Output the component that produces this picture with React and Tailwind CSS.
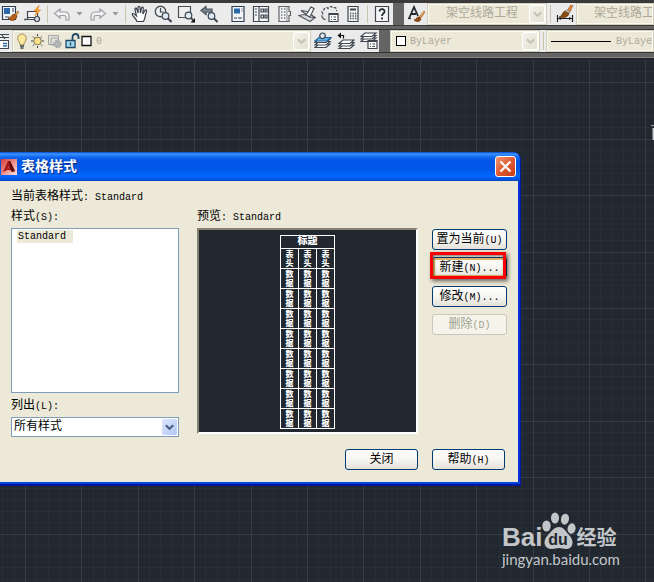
import React from "react";

/* ---------- small shared pieces ---------- */

const Latin = ({ children }) => <span className="text-[10px]">{children}</span>;

const Icon = ({ children }) => (
  <svg width="18" height="18" viewBox="0 0 18 18" fill="none" stroke="#3f4650" strokeWidth="1.2" aria-hidden="true">
    {children}
  </svg>
);

const Tool = ({ label, children }) => (
  <button type="button" aria-label={label} className="flex h-[22px] w-[23px] shrink-0 items-center justify-center">
    <Icon>{children}</Icon>
  </button>
);

const Split = () => (
  <span className="flex h-[22px] w-[6px] shrink-0 justify-center py-[2px]">
    <span className="w-px bg-[#c9c5a8]" />
  </span>
);

const Drop = ({ label }) => (
  <button type="button" aria-label={label} className="flex h-[22px] w-[13px] shrink-0 items-center justify-center">
    <svg width="7" height="4" viewBox="0 0 7 4"><path d="M0.5 0h6L3.5 3.6z" fill="#94979d" /></svg>
  </button>
);

const Chevron = ({ color }) => (
  <svg width="9" height="7" viewBox="0 0 9 7" fill="none" stroke={color} strokeWidth="2.2">
    <path d="M0.8 1.2L4.5 4.8L8.2 1.2" />
  </svg>
);

const Stack = () => (
  <>
    <path d="M5 12h11l-4 3.500H1z" fill="#fff" />
    <path d="M5 9.500h11l-4 3.500H1z" fill="#fff" />
    <path d="M5 7h11l-4 3.500H1z" fill="#fff" />
  </>
);

const Brush = () => (
  <>
    <path d="M11 9l5-8 1.500 1-3.500 8z" fill="#e08a3c" stroke="#9a5a20" strokeWidth="0.700" />
    <path d="M3 15c3 0 3-5 6-6l4 1.500c0 4-4 6.500-10 4.500z" fill="#8a4c14" stroke="#5f3410" strokeWidth="0.700" />
    <path d="M9 9l1.500-1 3.500 1.500-.8 1.500z" fill="#ddd" stroke="#555" strokeWidth="0.500" />
  </>
);

/* A faded combo of the toolbars: content, select and the arrow block */
const Combo = ({ label, value, className, lead, latin, arrow = true }) => (
  <div className={"flex min-w-0 items-center overflow-hidden border-2 border-[#fbfaf2] bg-[#ece9d8] outline outline-1 -outline-offset-1 outline-[#d2cfbb] " + className}>
    {lead}
    <select
      aria-label={label}
      className={"h-full min-w-0 flex-1 appearance-none bg-transparent text-[#aca899] outline-none " + (latin ? "text-[10px]" : "text-[12px]")}
    >
      <option>{value}</option>
    </select>
    {arrow && (
      <span className="flex h-full w-[16px] shrink-0 items-center justify-center rounded-[2px] border border-white bg-gradient-to-br from-[#f3f2ea] to-[#e4e1d2]">
        <Chevron color="#c6c3b5" />
      </span>
    )}
  </div>
);

/* ---------- toolbars ---------- */

const StandardBar = () => (
  <div className="flex h-[22px] w-[393px] shrink-0 overflow-hidden bg-[#ebebeb]">
    <div className="-ml-[2px] flex">
      <Tool label="工作空间">
        <path d="M1.500 1.500h13v13h-13z" fill="#f4f6f8" stroke="#2c3e56" />
        <path d="M3 3h6v6H3z" fill="#2b6aa8" stroke="none" />
        <path d="M4 12h4M11 4h2M11 6h2" stroke="#2c3e56" />
        <path d="M13 10l4-4 1 1-3 4z" fill="#e8a04c" stroke="#9a5a20" strokeWidth="0.600" />
        <path d="M7 13c3 0 3-3 6-4l3 2c-1 5-6 6-9 2z" fill="#b4601c" stroke="#6f3a10" strokeWidth="0.700" />
      </Tool>
      <Tool label="打印">
        <path d="M3.500 6.500h10v6h-10z" fill="#f3f3f3" />
        <path d="M1 14.500h11M1 13.500v2M3.500 12.500v2" />
        <circle cx="13" cy="14" r="2.500" fill="#dce4ee" />
        <path d="M15 0.500L10 6h3l-2 4.500L16.500 5h-3z" fill="#ffb03a" stroke="#e07a10" strokeWidth="0.700" />
      </Tool>
      <Split />
      <Tool label="放弃">
        <path d="M1.500 8.500L7 4v3h4.500c3 0 4.500 2 4.500 4.500V15h-3v-3c0-1-1-1.500-2-1.500H7V13z" fill="#f4f4f4" stroke="#9b9ea3" />
      </Tool>
      <Drop label="放弃列表" />
      <Tool label="重做">
        <path d="M16.500 8.500L11 4v3H6.500C3.500 7 2 9 2 11.500V15h3v-3c0-1 1-1.500 2-1.500h4V13z" fill="#f4f4f4" stroke="#9b9ea3" />
      </Tool>
      <Drop label="重做列表" />
      <Split />
      <Tool label="平移">
        <path d="M6 16.500c-1-3-3-4-4.500-6.500-.8-1.500 1-2 2-.8L5.500 11 4 4.500c-.3-1.600 1.400-1.800 1.800-.3L7.200 8 7 2.500c0-1.600 1.800-1.600 2 0L9.500 8l1-5c.3-1.500 2-1.200 1.800.3L11.800 9l2-3.500c.8-1.300 2.300-.4 1.700.9C14 10 14.500 13 12.500 16.500z" fill="#fff" stroke="#383e47" />
      </Tool>
      <Tool label="实时缩放">
        <circle cx="6.500" cy="6.500" r="5.200" fill="#f0f0f0" stroke="#4a5058" strokeWidth="1.400" />
        <path d="M6.500 3v4h3" />
        <circle cx="11.500" cy="11" r="3.300" fill="#dbe9f4" />
        <path d="M14 13.500l3.500 3.500" strokeWidth="2" />
      </Tool>
      <Tool label="窗口缩放">
        <path d="M1.500 1.500h12v11h-12z" fill="#eee" stroke="#4a5058" />
        <circle cx="11.500" cy="10.500" r="3.300" fill="#dbe9f4" />
        <path d="M14 13l2 2" strokeWidth="1.800" />
        <path d="M18 13v4.500h-4.500z" fill="#111" stroke="none" />
      </Tool>
      <Tool label="缩放上一个">
        <path d="M1 5.500L6 1.500v2.500h6v3H6v2.500z" fill="#7b8796" stroke="#4a5058" />
        <circle cx="11.500" cy="11" r="3.300" fill="#dbe9f4" />
        <path d="M14 13.500l3.500 3.500" strokeWidth="2" />
      </Tool>
      <span className="w-[6px] shrink-0" />
      <Tool label="特性">
        <path d="M3 1.500h12v15H3z" fill="#f5f6f8" stroke="#2c3e56" />
        <path d="M5 3.500h6v5H5z" fill="#2b6aa8" stroke="none" />
        <path d="M12.500 4h1M12.500 6h1M5 13h3M9 13h4" stroke="#2c3e56" />
      </Tool>
      <Tool label="设计中心">
        <path d="M1.500 1.500h15v15h-15zM7 1.500v15" fill="#f5f6f8" />
        <path d="M3 4h2M3 7h2M3 10h2M9 4h2.500v3H9zM13 4h2v3h-2zM9 10h2.500v3H9zM13 10h2v3h-2z" />
      </Tool>
      <Tool label="工具选项板">
        <path d="M4 1.500h10v5h1.500v4H14v6H4z" fill="#f2f2f2" stroke="#5f646b" />
        <path d="M6 4h1.500M9 4h1.500M6 7h1.500M9 7h1.500M6 10h1.500M9 10h1.500M6 13h1.500M9 13h1.500" stroke="#777c83" strokeWidth="1.500" />
        <path d="M12 2v14" stroke="#9a9ea4" />
      </Tool>
      <Tool label="图纸集">
        <path d="M1 10.500l5-1 11 3-5 4z" fill="#d8dade" stroke="#596069" />
        <path d="M3 5.500L12 12l5 .5L9 6.500z" fill="#f5f5f5" stroke="#4a5058" />
        <path d="M8 10L13 2l3 1.500-4 8.500z" fill="#fafafa" stroke="#4a5058" />
      </Tool>
      <Tool label="标记集">
        <path d="M2 13c-2-1.500-.5-3 0-4C0 7 1.500 5 3 5c0-3 3-3 4-1.500C8 1 11 1 12 3c3-1.500 4 1 3.500 3" strokeDasharray="3 1.500" />
        <path d="M2 13c1 2 3 2 4 1" strokeDasharray="3 1.500" />
        <path d="M8 8.500h9v8H8z" fill="#fff" />
        <path d="M8 9.500h9M10 12h1M12.500 12H15M10 14.500h1M12.500 14.500H15" />
      </Tool>
      <Tool label="快速计算器">
        <path d="M4 1.500h10v15H4z" fill="#f3f3f3" />
        <path d="M6 4.500h6" strokeWidth="2" />
        <path d="M6 8.500h1.300M8.500 8.500h1.300M11 8.500h1.300M6 11h1.300M8.500 11h1.300M11 11h1.300M6 13.500h1.300M8.500 13.500h1.300M11 13.500h1.300" strokeWidth="1.500" />
      </Tool>
      <Split />
      <Tool label="帮助">
        <path d="M2.500 1.500h13v15h-13z" fill="#f4f4f4" />
        <path d="M6.500 6.500C6.500 3 12 3.500 11.500 7c-.3 1.500-2.500 1.500-2.500 4M9 12.500v2" stroke="#22272e" strokeWidth="1.800" />
      </Tool>
    </div>
  </div>
);

const StylesBar = () => (
  <div className="ml-[11px] flex h-[22px] min-w-0 flex-1 items-center bg-[#ebebeb]">
    <Tool label="文字样式">
      <path d="M2 13.500L7 2l4 9M4 9h5" stroke="#252b33" strokeWidth="1.800" />
      <path d="M1 13.500h3" stroke="#252b33" />
      <path d="M12 12l5-6 1 1-4 6z" fill="#e8a04c" stroke="#9a5a20" strokeWidth="0.600" />
      <path d="M7 15c2 0 2-3 5-3l2 2c-1 3-4 3.500-7 1z" fill="#8a4c14" stroke="#6f3a10" strokeWidth="0.700" />
    </Tool>
    <Combo label="文字样式名称" value="架空线路工程" className="h-[22px] w-[120px] shrink-0 pl-[17px]" />
    <Split />
    <Tool label="标注样式">
      <path d="M1.500 10v7M16.500 10v7M2 13.500h14" stroke="#1c2026" />
      <path d="M2 13.500l3-1.500v3zM16 13.500L13 12v3z" fill="#1c2026" stroke="none" />
      <g transform="translate(0 -3)"><Brush /></g>
    </Tool>
    <Combo label="标注样式名称" value="架空线路工程" className="h-[22px] flex-1 pl-[16px]" arrow={false} />
  </div>
);

const LayerLead = () => (
  <svg width="80" height="18" viewBox="0 0 80 18" className="ml-[2px] shrink-0" fill="none" stroke="#3f4650" aria-hidden="true">
    {/* bulb */}
    <path d="M4 11C0 7 2 2 6 2s6 5 2 9v2H4z" fill="#ffe9a0" stroke="#a08a50" />
    <path d="M4 14h4M4.500 16h3" stroke="#3f4650" strokeWidth="1.400" />
    {/* sun */}
    <circle cx="21.500" cy="9" r="3.800" fill="#ffe08a" stroke="#7c7250" />
    <path d="M21.500 2v2M21.500 14v2M15 9h2M26 9h2M17 4.500l1.300 1.300M25 12.500l1.300 1.300M26 4.500l-1.300 1.300M18 12.500l-1.300 1.300" />
    {/* viewport freeze */}
    <path d="M32.500 3.500h10v9h-10zM35 6h7v7h-7z" fill="#e3e2da" stroke="#a4a6a6" />
    <circle cx="41.500" cy="12" r="3.200" fill="#b4b7ba" stroke="#a0a4a8" strokeWidth="2" strokeDasharray="1.500 1" />
    {/* open lock */}
    <path d="M50 8.500h9v7h-9z" fill="#9fdcf0" stroke="#224866" strokeWidth="1.300" />
    <path d="M56.500 8V5c0-4 6-4 6 0v2" stroke="#224866" strokeWidth="1.800" />
    <path d="M54.500 10.500v3" stroke="#224866" strokeWidth="1.500" />
    {/* colour swatch */}
    <path d="M66 4.500h9v9h-9z" fill="#fff" stroke="#111" strokeWidth="1.300" />
  </svg>
);

const LayersBar = () => (
  <div className="flex h-[22px] w-[379px] shrink-0 items-center overflow-hidden bg-[#ebebeb]">
    <div className="-ml-[12px] flex w-[24px] shrink-0">
      <Tool label="图层特性">
        <path d="M9 2.500h9M9 5.500h9M11 3l3 4" />
        <path d="M7 8.500h10.500v8H7z" fill="#fff" />
        <path d="M12 11.500h4M12 14h4" stroke="#2b6aa8" strokeWidth="1.500" />
      </Tool>
    </div>
    <Combo label="图层" value="0" latin className="h-[22px] w-[299px] shrink-0" lead={<LayerLead />} />
    <Tool label="置为当前图层">
      <Stack />
      <path d="M5 5.500h12l-4 3.500H1z" fill="#63b4ea" stroke="#24649c" />
      <circle cx="8.500" cy="3.800" r="2.800" fill="#dce4ec" />
    </Tool>
    <Tool label="上一个图层">
      <g transform="translate(1 1)"><Stack /></g>
      <path d="M0.500 3.500L4 0.500v6z" fill="#111" stroke="none" />
      <path d="M3 3.500h3.500v3" stroke="#111" />
    </Tool>
    <Tool label="图层状态">
      <g transform="translate(0 -6)"><Stack /></g>
      <path d="M8 8.500h9v8H8z" fill="#fff" />
      <path d="M8 9.500h9M10 12h1M12.500 12H15M10 14.500h1M12.500 14.500H15" />
    </Tool>
  </div>
);

const PropertiesBar = () => (
  <div className="ml-[11px] flex h-[22px] min-w-0 flex-1 items-center bg-[#ebebeb]">
    <Combo
      label="颜色" value="ByLayer" latin className="h-[22px] w-[150px] shrink-0"
      lead={<span className="mx-[4px] h-[10px] w-[10px] shrink-0 border border-black bg-white" />}
    />
    <Split />
    <Combo
      label="线型" value="ByLayer" latin arrow={false} className="h-[22px] flex-1"
      lead={<span className="ml-[3px] mr-[5px] h-px w-[60px] shrink-0 bg-black" />}
    />
  </div>
);

const Toolbars = () => (
  <header className="shrink-0 bg-[#646464]">
    <div className="border-b border-t-[3px] border-[#3a3a3a]">
      <div className="flex bg-[#646464]">
        <StandardBar />
        <StylesBar />
      </div>
    </div>
    <div className="mt-[3px] border-y border-[#333]">
      <div className="flex bg-[#646464]">
        <LayersBar />
        <PropertiesBar />
      </div>
    </div>
    <div className="mt-[4px] h-px bg-[#8a8580]" />
    <div className="h-[2px] bg-[#20232c]" />
  </header>
);

/* ---------- drawing area ---------- */

const GRID = Array.from({ length: 240 }, (_, i) => i);

const DrawingGrid = () => (
  <svg className="absolute inset-0 h-full w-full" aria-hidden="true" shapeRendering="crispEdges">
    {[false, true].map((major) =>
      GRID.filter((i) => (i % 5 === 2) === major).map((i) => (
        <g key={i} fill={major ? "#353c48" : "#272e38"}>
          <rect x={Math.round(i * 11.28 + 2.4)} y="0" width="1" height="100%" />
          <rect x="0" y={Math.round(i * 11.28 - 0.2)} width="100%" height="1" />
        </g>
      ))
    )}
  </svg>
);

/* ---------- dialog ---------- */

const XpButton = ({ children, className = "", disabled }) => (
  <button
    type="button"
    disabled={disabled}
    className={
      "h-[21px] shrink-0 whitespace-nowrap rounded-[3px] border pt-[2px] text-center text-[12px] leading-[17px] " +
      (disabled
        ? "border-[#c9c7ba] bg-[#f5f4ea] text-[#a1a192] "
        : "border-[#003c74] bg-gradient-to-b from-white via-[#f6f5f1] to-[#e4e1d8] text-black ") +
      className
    }
  >
    {children}
  </button>
);

const Stacked = ({ children, head }) => {
  const Cell = head ? "th" : "td";
  return (
    <Cell className="h-[20px] w-[18px] border border-white p-0 text-center text-[8px] font-black leading-[9px]">
      <span className="block h-[9px]">{children[0]}</span>
      <span className="block h-[9px]">{children[1]}</span>
    </Cell>
  );
};

const PreviewTable = () => (
  <table className="h-[194px] border-collapse text-white">
    <thead>
      <tr>
        <th colSpan={3} className="h-[13px] border border-white p-0 text-[10px] font-black leading-[12px]">
          <span className="block h-[12px]">标题</span>
        </th>
      </tr>
      <tr>{[0, 1, 2].map((c) => <Stacked head key={c}>表头</Stacked>)}</tr>
    </thead>
    <tbody>
      {[0, 1, 2, 3, 4, 5, 6, 7].map((r) => (
        <tr key={r}>{[0, 1, 2].map((c) => <Stacked key={c}>数据</Stacked>)}</tr>
      ))}
    </tbody>
  </table>
);

const TitleBar = () => (
  <div className="flex h-[29px] items-center rounded-tr-[7px] bg-[linear-gradient(#0a4bc8_0px,#3d93ff_2px,#1268ee_5px,#0055e5_9px,#0058ea_18px,#0067ff_24px,#0050dc_28px,#003cb4_29px)] pl-px pr-[4px]">
    <svg width="16" height="16" viewBox="0 0 16 16" aria-hidden="true">
      <defs>
        <linearGradient id="app" x1="0" y1="0" x2="1" y2="1">
          <stop offset="0" stopColor="#d63a34" />
          <stop offset="1" stopColor="#ffe2de" />
        </linearGradient>
      </defs>
      <path d="M0 0h16v16H0z" fill="url(#app)" />
      <path d="M7 2h2l5 10-3 1-2-2H6l-4 2z" fill="#a81414" />
      <path d="M8 2h1l5 10-3 1-2-4z" fill="#5c0808" />
      <path d="M7.500 6.500L9 9.500H6z" fill="#c8403a" />
    </svg>
    <h1 className="ml-[4px] flex-1 text-[14px] font-bold leading-[20px] text-white [text-shadow:1px_1px_1px_#0a2a80]">表格样式</h1>
    <button type="button" aria-label="关闭窗口" className="flex h-[21px] w-[21px] items-center justify-center rounded-[3px] border border-white bg-gradient-to-br from-[#f0936f] via-[#e05a32] to-[#c83c14]">
      <svg width="13" height="13" viewBox="0 0 13 13" stroke="#fff" strokeWidth="2.200"><path d="M1.500 1.500l10 10M11.500 1.500l-10 10" /></svg>
    </button>
  </div>
);

const TableStyleDialog = () => (
  <section role="dialog" aria-label="表格样式" className="absolute left-0 top-[92px] w-[521px] rounded-tr-[8px] border-r border-[#0019a0] bg-[#0831d9] text-[12px] leading-[22px] text-black">
    <TitleBar />
    <div className="mr-[2px] bg-[#ece9d8] pb-[12px] pl-[11px] pr-[11px] pt-[5px]">
      <p className="h-[20px]">当前表格样式<Latin>: Standard</Latin></p>
      <div className="flex">
        <div className="flex w-[168px] flex-col">
          <label htmlFor="styles" className="h-[20px]">样式<Latin>(S):</Latin></label>
          <ul id="styles" role="listbox" className="mt-[2px] h-[165px] border border-[#7f9db9] bg-white px-[5px] py-px">
            <li role="option" aria-selected="true" className="flex h-[13px] w-[56px] items-center bg-[#ece9d8] pl-px"><Latin>Standard</Latin></li>
          </ul>
          <label htmlFor="list" className="mt-[2px] h-[20px]">列出<Latin>(L):</Latin></label>
          <div className="mt-[2px] flex h-[20px] items-center border border-[#7f9db9] bg-white pr-px">
            <select id="list" className="h-full min-w-0 flex-1 appearance-none bg-transparent pl-[2px] pt-px text-[12px] leading-[17px] outline-none">
              <option>所有样式</option>
            </select>
            <span className="flex h-[16px] w-[15px] items-center justify-center rounded-[2px] bg-gradient-to-br from-[#dce6fd] to-[#b2c8f6]">
              <Chevron color="#4d6185" />
            </span>
          </div>
        </div>
        <div className="ml-[18px] flex-1">
          <h2 className="h-[20px]">预览<Latin>: Standard</Latin></h2>
          <div className="mt-[2px] flex h-[206px] items-start justify-center border-2 border-b-white border-l-[#85826f] border-r-white border-t-[#85826f] bg-[#212830] pt-[5px]">
            <PreviewTable />
          </div>
        </div>
        <div className="ml-[14px] mt-[23px] flex w-[75px] flex-col">
          <XpButton>置为当前<Latin>(U)</Latin></XpButton>
          <div className="relative mt-[7px] flex flex-col">
            <XpButton className="shadow-[inset_0_0_0_2px_#e5b567]">新建<Latin>(N)...</Latin></XpButton>
            <span className="pointer-events-none absolute -left-[2px] -top-[5px] right-px h-[27px] border-[3px] border-[#fb0000] shadow-[2px_2px_4px_rgba(0,0,0,0.6),inset_1px_1px_3px_rgba(0,0,0,0.5)]" />
          </div>
          <XpButton className="mt-[8px]">修改<Latin>(M)...</Latin></XpButton>
          <XpButton disabled className="mt-[7px]">删除<Latin>(D)</Latin></XpButton>
        </div>
      </div>
      <div className="mr-[2px] mt-[12px] flex justify-end gap-[14px]">
        <XpButton className="w-[73px]">关闭</XpButton>
        <XpButton className="w-[73px]">帮助<Latin>(H)</Latin></XpButton>
      </div>
    </div>
    <div className="h-[2px] bg-[#0046dc]" />
    <div className="h-[2px] bg-[#00189c]" />
  </section>
);

/* ---------- watermark ---------- */

const Watermark = () => (
  <div className="absolute bottom-[14px] right-[36px] w-[116px] text-[#c3c6c9]">
    <div className="flex h-[38px] items-end">
      <span className="font-['Liberation_Sans',sans-serif] text-[26px] font-bold leading-[26px]">Bai</span>
      <svg width="34" height="38" viewBox="0 0 34 38" className="shrink-0" fill="currentColor" aria-hidden="true">
        <ellipse cx="4.500" cy="14" rx="4.200" ry="5.500" />
        <ellipse cx="13" cy="6" rx="4" ry="5.500" />
        <ellipse cx="23" cy="7" rx="4" ry="5.500" transform="rotate(10 22 7)" />
        <ellipse cx="29.500" cy="16.500" rx="4" ry="5.300" transform="rotate(10 29 17)" />
        <path d="M17 15c5 0 7 5 10 8 6 6 4 14-3 14-3 0-4-1-7-1s-4 1-7 1C2 37 0 29 6 23c4-4 6-8 11-8z" />
        <text x="16" y="33" textAnchor="middle" fill="#212830" fontFamily="Liberation Sans, sans-serif" fontWeight="bold" fontSize="16">du</text>
      </svg>
      <span className="font-['Noto_Sans_CJK_SC',sans-serif] text-[20px] font-bold leading-[26px]">经验</span>
    </div>
    <p className="whitespace-nowrap font-['Lato',sans-serif] text-[15px] leading-[18px]">jingyan.baidu.com</p>
  </div>
);

export default function App() {
  return (
    <div lang="zh-CN" className="flex min-h-screen flex-col overflow-hidden bg-[#212830] font-['Liberation_Mono','Noto_Sans_CJK_SC',monospace]">
      <Toolbars />
      <main className="relative min-h-[440px] flex-1 overflow-hidden">
        <DrawingGrid />
        <TableStyleDialog />
        <div className="absolute right-0 top-[65px] flex flex-col items-end gap-[2px]" aria-hidden="true">
          <span className="h-px w-[3px] bg-[#9a9fa6]" />
          <span className="h-[12px] w-[2px] border-l border-[#777c84] bg-[#c8cbcf]" />
        </div>
        <Watermark />
      </main>
    </div>
  );
}
